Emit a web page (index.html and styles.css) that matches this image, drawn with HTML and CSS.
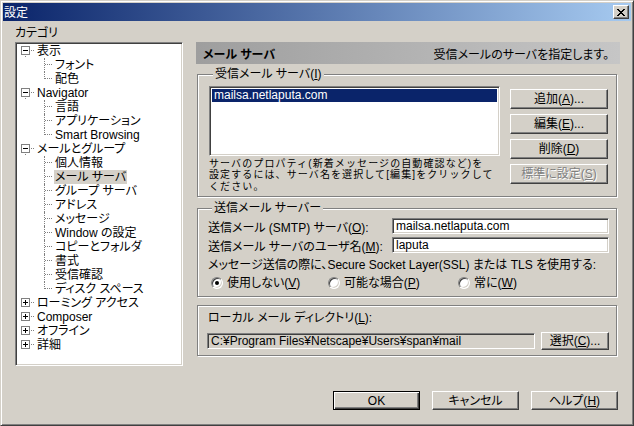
FILE: index.html
```html
<!DOCTYPE html>
<html lang="ja">
<head>
<meta charset="utf-8">
<title>設定</title>
<link rel="stylesheet" href="styles.css">
</head>
<body>
<div class="window">
  <div class="titlebar">
    <span class="title">設定</span>
    <span class="close"><svg width="8" height="7" viewBox="0 0 8 7" shape-rendering="crispEdges"><path fill="#000" d="M0 0h2v1H0zM6 0h2v1H6zM1 1h2v1H1zM5 1h2v1H5zM2 2h4v1H2zM3 3h2v1H3zM2 4h4v1H2zM1 5h2v1H1zM5 5h2v1H5zM0 6h2v1H0zM6 6h2v1H6z"/></svg></span>
  </div>
  <div class="body">
    <div class="main">
      <div class="left">
        <div class="cat-label">カテゴリ</div>
        <div class="tree sunken">
          <div class="row top"><svg class="exp" width="13" height="14" viewBox="0 0 13 14" shape-rendering="crispEdges"><rect x="0.5" y="2.5" width="8" height="8" fill="#fff" stroke="#808080"/><path d="M2 6.5h5" stroke="#000"/><path d="M10 6.5h1M12 6.5h1M4.5 12v1" stroke="#808080"/></svg><span class="t">表示</span></div>
          <div class="row child"><span class="conn"></span><span class="t">フォント</span></div>
          <div class="row child"><span class="conn last"></span><span class="t">配色</span></div>
          <div class="row top"><svg class="exp" width="13" height="14" viewBox="0 0 13 14" shape-rendering="crispEdges"><rect x="0.5" y="2.5" width="8" height="8" fill="#fff" stroke="#808080"/><path d="M2 6.5h5" stroke="#000"/><path d="M10 6.5h1M12 6.5h1M4.5 12v1" stroke="#808080"/></svg><span class="t">Navigator</span></div>
          <div class="row child"><span class="conn"></span><span class="t">言語</span></div>
          <div class="row child"><span class="conn"></span><span class="t">アプリケーション</span></div>
          <div class="row child"><span class="conn last"></span><span class="t">Smart Browsing</span></div>
          <div class="row top"><svg class="exp" width="13" height="14" viewBox="0 0 13 14" shape-rendering="crispEdges"><rect x="0.5" y="2.5" width="8" height="8" fill="#fff" stroke="#808080"/><path d="M2 6.5h5" stroke="#000"/><path d="M10 6.5h1M12 6.5h1M4.5 12v1" stroke="#808080"/></svg><span class="t">メールとグループ</span></div>
          <div class="row child"><span class="conn"></span><span class="t">個人情報</span></div>
          <div class="row child"><span class="conn"></span><span class="t sel">メール サーバ</span></div>
          <div class="row child"><span class="conn"></span><span class="t">グループ サーバ</span></div>
          <div class="row child"><span class="conn"></span><span class="t">アドレス</span></div>
          <div class="row child"><span class="conn"></span><span class="t">メッセージ</span></div>
          <div class="row child"><span class="conn"></span><span class="t">Window の設定</span></div>
          <div class="row child"><span class="conn"></span><span class="t">コピーとフォルダ</span></div>
          <div class="row child"><span class="conn"></span><span class="t">書式</span></div>
          <div class="row child"><span class="conn"></span><span class="t">受信確認</span></div>
          <div class="row child"><span class="conn last"></span><span class="t">ディスク スペース</span></div>
          <div class="row top"><svg class="exp" width="13" height="14" viewBox="0 0 13 14" shape-rendering="crispEdges"><rect x="0.5" y="2.5" width="8" height="8" fill="#fff" stroke="#808080"/><path d="M2 6.5h5M4.5 4v5" stroke="#000"/><path d="M10 6.5h1M12 6.5h1" stroke="#808080"/></svg><span class="t">ローミング アクセス</span></div>
          <div class="row top"><svg class="exp" width="13" height="14" viewBox="0 0 13 14" shape-rendering="crispEdges"><rect x="0.5" y="2.5" width="8" height="8" fill="#fff" stroke="#808080"/><path d="M2 6.5h5M4.5 4v5" stroke="#000"/><path d="M10 6.5h1M12 6.5h1" stroke="#808080"/></svg><span class="t">Composer</span></div>
          <div class="row top"><svg class="exp" width="13" height="14" viewBox="0 0 13 14" shape-rendering="crispEdges"><rect x="0.5" y="2.5" width="8" height="8" fill="#fff" stroke="#808080"/><path d="M2 6.5h5M4.5 4v5" stroke="#000"/><path d="M10 6.5h1M12 6.5h1" stroke="#808080"/></svg><span class="t">オフライン</span></div>
          <div class="row top"><svg class="exp" width="13" height="14" viewBox="0 0 13 14" shape-rendering="crispEdges"><rect x="0.5" y="2.5" width="8" height="8" fill="#fff" stroke="#808080"/><path d="M2 6.5h5M4.5 4v5" stroke="#000"/><path d="M10 6.5h1M12 6.5h1" stroke="#808080"/></svg><span class="t">詳細</span></div>
        </div>
      </div>

      <div class="right">
        <div class="header">
          <span class="h-title">メール サーバ</span>
          <span class="h-desc">受信メールのサーバを指定します。</span>
        </div>

        <div class="group g1">
          <div class="legend"><span>受信メール サーバ(<u>I</u>)</span></div>
          <div class="g1-body">
            <div class="list-col">
              <div class="listbox sunken">
                <div class="list-item selected">mailsa.netlaputa.com</div>
              </div>
              <div class="desc">
                <div class="dline">サーバのプロパティ(新着メッセージの自動確認など)を</div>
                <div class="dline">設定するには、サーバ名を選択して[編集]をクリックして</div>
                <div class="dline">ください。</div>
              </div>
            </div>
            <div class="btn-col">
              <div class="btn">追加(<u>A</u>)...</div>
              <div class="btn">編集(<u>E</u>)...</div>
              <div class="btn">削除(<u>D</u>)</div>
              <div class="btn disabled">標準に設定(<u>S</u>)</div>
            </div>
          </div>
        </div>

        <div class="group g2">
          <div class="legend"><span>送信メール サーバー</span></div>
          <div class="field-row r1">
            <span class="f-label">送信メール (SMTP) サーバ(<u>O</u>):</span>
            <div class="input sunken">mailsa.netlaputa.com</div>
          </div>
          <div class="field-row r2">
            <span class="f-label">送信メール サーバのユーザ名(<u>M</u>):</span>
            <div class="input sunken">laputa</div>
          </div>
          <div class="ssl-text">メッセージ送信の際に、Secure Socket Layer(SSL) または TLS を使用する:</div>
          <div class="radios">
            <div class="radio-item"><span class="radio on"></span><span>使用しない(<u>V</u>)</span></div>
            <div class="radio-item"><span class="radio"></span><span>可能な場合(<u>P</u>)</span></div>
            <div class="radio-item"><span class="radio"></span><span>常に(<u>W</u>)</span></div>
          </div>
        </div>

        <div class="group g3">
          <div class="dir-label">ローカル メール ディレクトリ(<u>L</u>):</div>
          <div class="dir-row">
            <div class="input sunken readonly">C:¥Program Files¥Netscape¥Users¥span¥mail</div>
            <div class="btn choose">選択(<u>C</u>)...</div>
          </div>
        </div>
      </div>
    </div>

    <div class="footer">
      <div class="btn big default">OK</div>
      <div class="btn big">キャンセル</div>
      <div class="btn big">ヘルプ(<u>H</u>)</div>
    </div>
  </div>
</div>
</body>
</html>
```

FILE: styles.css
```css
* { box-sizing: border-box; }
html, body { margin: 0; padding: 0; }
body {
  width: 634px;
  height: 426px;
  overflow: hidden;
  background: #d4d0c8;
  font-family: "Liberation Sans", "Noto Sans CJK JP", sans-serif;
  font-size: 12px;
  color: #000;
  font-feature-settings: "palt";
  white-space: nowrap;
}
u { text-decoration: underline; text-underline-offset: 1px; }

.window {
  width: 634px;
  height: 426px;
  border: 1px solid;
  border-color: #d4d0c8 #404040 #404040 #d4d0c8;
  box-shadow: inset 1px 1px #fff, inset -1px -1px #808080;
  padding: 2px;
  display: flex;
  flex-direction: column;
}

.titlebar {
  height: 18px;
  flex: none;
  background: linear-gradient(to right, #0a246a, #a6caf0);
  display: flex;
  align-items: center;
  padding: 0 2px 0 1px;
}
.title { color: #fff; line-height: 18px; padding-top: 1px; }
.close {
  margin-left: auto;
  width: 16px;
  height: 14px;
  background: #d4d0c8;
  border: 1px solid;
  border-color: #fff #404040 #404040 #fff;
  box-shadow: inset -1px -1px #808080;
  display: flex;
  align-items: center;
  justify-content: center;
}
.close svg { display: block; }

.body {
  flex: 1;
  padding: 4px 13px 0 12px;
  display: flex;
  flex-direction: column;
}
.main {
  display: flex;
  align-items: flex-start;
  gap: 13px;
}

.sunken {
  border: 1px solid;
  border-color: #808080 #fff #fff #808080;
  box-shadow: inset 1px 1px #404040, inset -1px -1px #d4d0c8;
  background: #fff;
}

/* left: category tree */
.left { width: 168px; flex: none; }
.cat-label { line-height: 14px; height: 14px; margin-bottom: 3px; padding-top: 1px; }
.tree { height: 324px; padding: 1px 1px 0; }
.row {
  height: 14px;
  display: flex;
  align-items: center;
  line-height: 14px;
}
.row.top { padding-left: 4px; }
.row.child { padding-left: 27px; }
.exp { display: block; flex: none; }
.row.top .t { margin-left: 3px; }
.conn {
  flex: none;
  width: 9px;
  height: 14px;
  border-left: 1px dotted #808080;
  background: repeating-linear-gradient(to right, #808080 0 1px, transparent 1px 2px) 0 6px / 8px 1px no-repeat;
}
.conn.last { height: 7px; align-self: flex-start; }
.row.child .t { margin-left: 1px; padding: 0 1px; }
.t.sel { background: #d4d0c8; }

/* right panel */
.right { width: 424px; flex: none; padding-top: 17px; }
.header {
  height: 22px;
  display: flex;
  align-items: center;
  justify-content: space-between;
  padding: 0 11px 0 7px;
  background: linear-gradient(to right, #9e9e9e, #c6c6c6);
}
.h-title { font-weight: bold; }

.group {
  width: 420px;
  margin-left: 1px;
  border: 1px solid #808080;
  box-shadow: inset 1px 1px #fff, 1px 1px #fff;
}
.legend {
  height: 13px;
  line-height: 13px;
  margin-top: -7px;
  padding-left: 4px;
}
.legend span { background: #d4d0c8; padding: 0 2px; }

.g1 { margin-top: 10px; height: 123px; padding: 0 8px 0 11px; }
.g1-body { display: flex; gap: 10px; margin-top: 5px; }
.list-col { width: 291px; flex: none; }
.listbox { height: 70px; padding: 2px; }
.list-item { height: 13px; line-height: 13px; padding-left: 2px; }
.list-item.selected { background: #0a246a; color: #fff; }
.desc {
  margin-top: 1.5px;
  font-size: 10px;
  letter-spacing: 1.1px;
  font-feature-settings: normal;
}
.dline { height: 11.5px; line-height: 11.5px; }
.btn-col {
  width: 98px;
  flex: none;
  display: flex;
  flex-direction: column;
  gap: 5px;
  margin-top: 3px;
}
.btn {
  height: 20px;
  background: #d4d0c8;
  border: 1px solid;
  border-color: #fff #404040 #404040 #fff;
  box-shadow: inset -1px -1px #808080;
  display: flex;
  align-items: center;
  justify-content: center;
  line-height: 14px;
}
.btn.disabled { color: #808080; text-shadow: 1px 1px #fff; }

.g2 { margin-top: 11px; height: 89px; padding: 0 7px 0 10px; }
.field-row { display: flex; align-items: center; height: 16px; }
.field-row.r1 { margin-top: 3px; }
.field-row.r2 { margin-top: 3px; }
.f-label { width: 184px; flex: none; }
.input {
  height: 16px;
  width: 217px;
  padding: 0 3px;
  line-height: 14px;
  display: flex;
  align-items: center;
}
.ssl-text { margin-top: 5px; line-height: 14px; }
.radios {
  margin-top: 4px;
  margin-left: 3px;
  display: grid;
  grid-template-columns: 117px 130px auto;
  height: 14px;
}
.radio-item { display: flex; align-items: center; gap: 4px; line-height: 14px; }
.radio {
  flex: none;
  width: 12px;
  height: 12px;
  border-radius: 50%;
  background: #fff;
  border: 1px solid;
  border-color: #808080 #fff #fff #808080;
  box-shadow: inset 1px 1px #404040, inset -1px -1px #d4d0c8;
  display: flex;
  align-items: center;
  justify-content: center;
}
.radio.on::after {
  content: "";
  width: 4px;
  height: 4px;
  border-radius: 50%;
  background: #000;
}

.g3 { margin-top: 8px; height: 51px; padding: 5px 7px 0 9px; }
.dir-label { line-height: 14px; padding-left: 1px; }
.dir-row { display: flex; align-items: center; gap: 6px; margin-top: 7px; height: 18px; }
.input.readonly { width: 328px; background: #d4d0c8; }
.btn.choose { width: 68px; height: 18px; }

.footer {
  margin-top: 25px;
  display: flex;
  justify-content: flex-end;
  gap: 12px;
}
.btn.big { width: 87px; height: 19px; }
.btn.default {
  border-color: #000;
  box-shadow: inset 1px 1px #fff, inset -1px -1px #404040, inset -2px -2px #808080;
}
```
